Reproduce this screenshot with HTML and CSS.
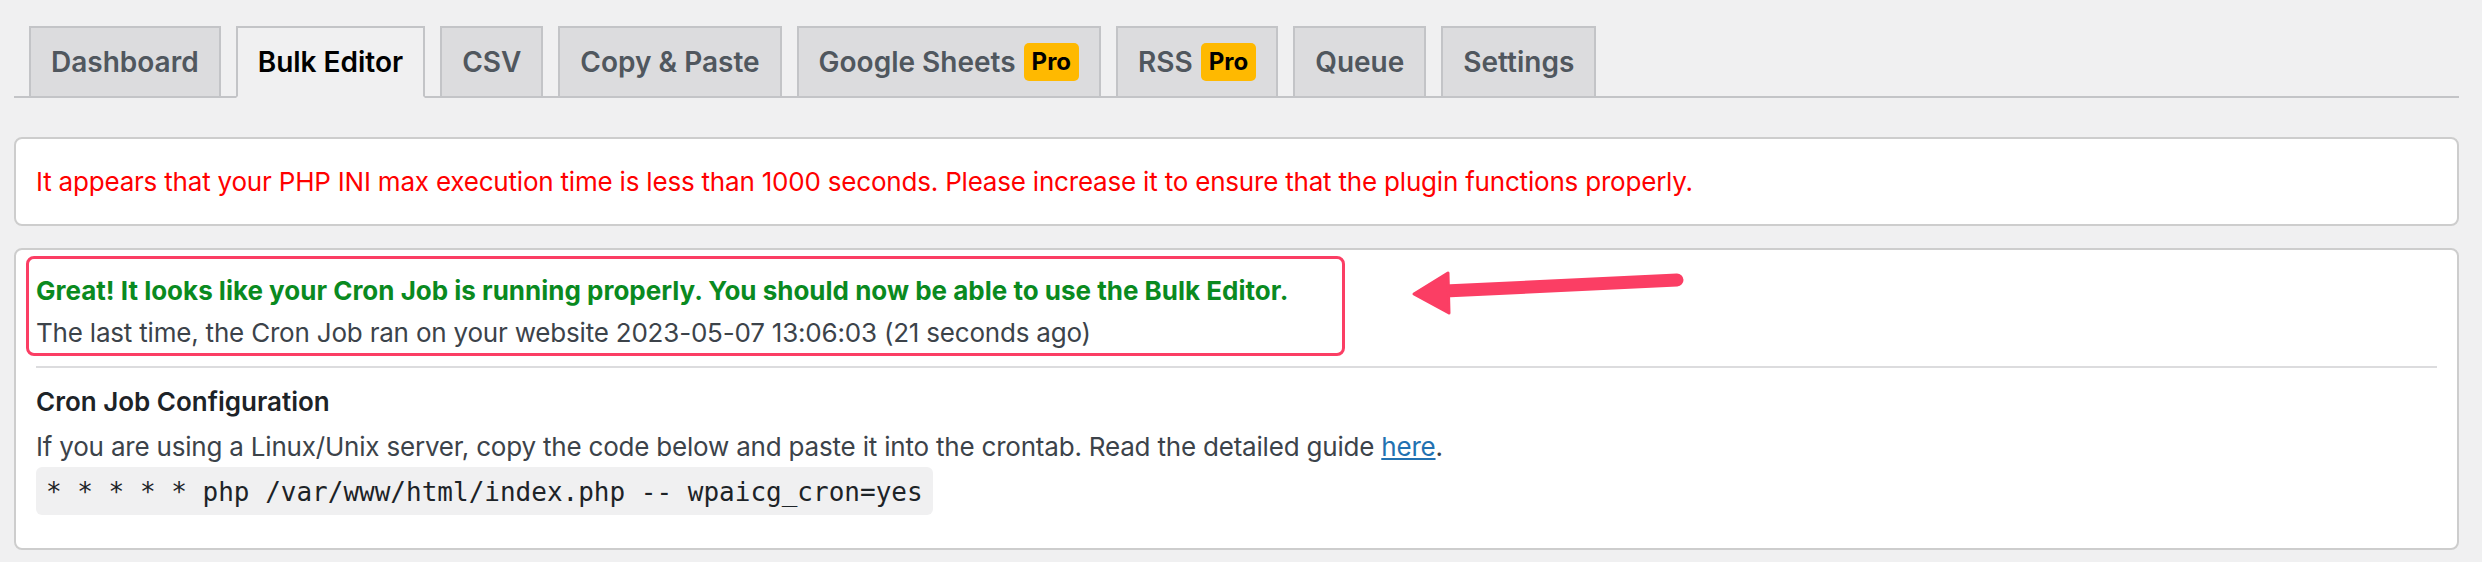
FILE: index.html
```html
<!DOCTYPE html>
<html lang="en">
<head>
<meta charset="utf-8">
<title>Bulk Editor</title>
<link rel="stylesheet" href="styles.css">
</head>
<body>
<div class="wrap">
  <nav class="nav-tabs">
    <a class="tab">Dashboard</a>
    <a class="tab active">Bulk Editor</a>
    <a class="tab">CSV</a>
    <a class="tab">Copy &amp; Paste</a>
    <a class="tab">Google Sheets <span class="pro">Pro</span></a>
    <a class="tab">RSS <span class="pro">Pro</span></a>
    <a class="tab">Queue</a>
    <a class="tab">Settings</a>
  </nav>

  <div class="notice">
    <p class="error-text">It appears that your PHP INI max execution time is less than 1000 seconds. Please increase it to ensure that the plugin functions properly.</p>
  </div>

  <div class="panel">
    <div class="status">
      <p class="ok">Great! It looks like your Cron Job is running properly. You should now be able to use the Bulk Editor.</p>
      <p class="last">The last time, the Cron Job ran on your website 2023-05-07 13:06:03 (21 seconds ago)</p>
    </div>
    <hr class="divider">
    <h3 class="config-title">Cron Job Configuration</h3>
    <p class="config-text">If you are using a Linux/Unix server, copy the code below and paste it into the crontab. Read the detailed guide <a class="link" href="#">here</a>.</p>
    <code class="cron-code">* * * * * php /var/www/html/index.php -- wpaicg_cron=yes</code>

    <div class="annot-box"></div>
    <svg class="annot-arrow" width="290" height="60" viewBox="0 0 290 60" aria-hidden="true">
      <path d="M40 27 L272 16" stroke="#fb3e64" stroke-width="13" stroke-linecap="round" fill="none"/>
      <path d="M9 30 L43 9 L44 49 Z" fill="#fb3e64" stroke="#fb3e64" stroke-width="3" stroke-linejoin="round"/>
    </svg>
  </div>
</div>
</body>
</html>
```
FILE: styles.css
```css
* { box-sizing: border-box; }

html, body {
  margin: 0;
  background: #f0f0f1;
}

body {
  font-family: Inter, "Liberation Sans", sans-serif;
  color: #3c434a;
}

.wrap {
  padding: 26px 23px 0 14px;
}

/* Tabs */
.nav-tabs {
  display: flex;
  align-items: flex-end;
  gap: 15px;
  padding-left: 15px;
  border-bottom: 2px solid #c3c4c7;
}

.tab {
  display: flex;
  align-items: center;
  gap: 8px;
  height: 72px;
  margin-bottom: -2px;
  padding: 0 20px;
  border: 2px solid #c3c4c7;
  background: #dcdcde;
  color: #50575e;
  font-size: 28px;
  font-weight: 600;
  line-height: 48px;
  text-decoration: none;
  white-space: nowrap;
}

.tab.active {
  background: #f0f0f1;
  border-bottom-color: #f0f0f1;
  color: #000;
}

.pro {
  display: inline-block;
  height: 38px;
  padding: 0 8px;
  border-radius: 5px;
  background: #ffb900;
  color: #000;
  font-size: 24px;
  font-weight: 700;
  line-height: 38px;
}

/* Notice */
.notice {
  margin-top: 39px;
  padding: 22px 20px;
  background: #fff;
  border: 2px solid #cdcdcd;
  border-radius: 8px;
}

.error-text {
  margin: 0;
  color: #ff0000;
  font-size: 26px;
  line-height: 41px;
  letter-spacing: -0.2px;
}

/* Panel */
.panel {
  position: relative;
  margin-top: 22px;
  padding: 20px 20px 33px;
  background: #fff;
  border: 2px solid #cdcdcd;
  border-radius: 8px;
}

.status p {
  margin: 0;
  font-size: 26px;
  line-height: 42px;
}

.status .ok {
  color: #0a8a1f;
  font-weight: 700;
}

.status .last {
  color: #3c434a;
  letter-spacing: -0.2px;
}

.divider {
  margin: 12px 0 0;
  height: 2px;
  border: 0;
  background: #dcdcde;
}

.config-title {
  margin: 14px 0 0;
  color: #1d2327;
  font-size: 26px;
  font-weight: 600;
  line-height: 40px;
}

.config-text {
  margin: 5px 0 0;
  font-size: 26px;
  line-height: 40px;
  letter-spacing: -0.2px;
}

.link {
  color: #2271b1;
  text-decoration: underline;
}

.cron-code {
  display: inline-block;
  padding: 6px 10px 4px;
  border-radius: 6px;
  background: #f0f0f1;
  color: #1d2327;
  font-family: "DejaVu Sans Mono", "Liberation Mono", monospace;
  font-size: 26px;
  line-height: 38px;
}

/* Annotations drawn over the panel */
.annot-box {
  position: absolute;
  left: 10px;
  top: 6px;
  width: 1319px;
  height: 100px;
  border: 3px solid #fb3e64;
  border-radius: 8px;
}

.annot-arrow {
  position: absolute;
  left: 1389px;
  top: 14px;
}
```
